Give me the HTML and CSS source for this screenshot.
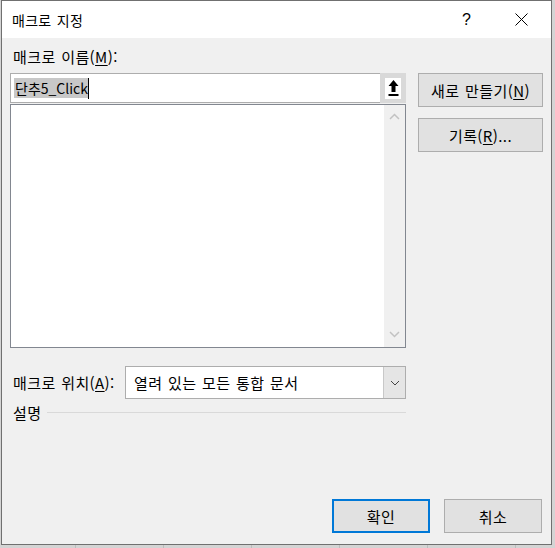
FILE: index.html
```html
<!DOCTYPE html>
<html lang="ko">
<head>
<meta charset="utf-8">
<link rel="stylesheet" href="styles.css">
</head>
<body>
<div class="desk">
  <div class="dialog">
    <div class="titlebar">
      <span class="title">매크로 지정</span>
      <span class="help">?</span>
      <svg class="close" width="13" height="13" viewBox="0 0 13 13"><path d="M0.5 0.5 L12.5 12.5 M12.5 0.5 L0.5 12.5" stroke="#000" stroke-width="1"/></svg>
    </div>
    <div class="content">
      <div class="main">
        <div class="leftcol">
          <div class="label">매크로 이름(<u>M</u>):</div>
          <div class="namebox">
            <div class="nameinput"><span class="sel">단추5_Click</span><span class="caret"></span></div>
            <div class="collapse">
              <div class="collapse-inner">
                <svg width="15" height="20" viewBox="0 0 15 20"><path d="M7.5 2 L2.5 8 L5.5 8 L5.5 14 L9.5 14 L9.5 8 L12.5 8 Z" fill="#000"/><rect x="2.5" y="16" width="10" height="2" fill="#000"/></svg>
              </div>
            </div>
          </div>
          <div class="listbox">
            <div class="list-area"></div>
            <div class="scrollbar">
              <svg width="11" height="7" viewBox="0 0 11 7"><path d="M1 6 L5.5 1.5 L10 6" fill="none" stroke="#c2c2c2" stroke-width="1.5"/></svg>
              <svg width="11" height="7" viewBox="0 0 11 7"><path d="M1 1 L5.5 5.5 L10 1" fill="none" stroke="#c2c2c2" stroke-width="1.5"/></svg>
            </div>
          </div>
        </div>
        <div class="rightcol">
          <div class="btn">새로 만들기(<u>N</u>)</div>
          <div class="btn">기록(<u>R</u>)...</div>
        </div>
      </div>
      <div class="locrow">
        <span class="loclabel">매크로 위치(<u>A</u>):</span>
        <div class="combo">
          <span class="combo-text">열려 있는 모든 통합 문서</span>
          <span class="combo-btn"><svg width="10" height="6" viewBox="0 0 10 6"><path d="M1 1 L5 5 L9 1" fill="none" stroke="#444" stroke-width="1"/></svg></span>
        </div>
      </div>
      <div class="descrow">
        <span class="desclabel">설명</span>
        <span class="descline"></span>
      </div>
      <div class="footer">
        <div class="btn btn-ok">확인</div>
        <div class="btn btn-cancel">취소</div>
      </div>
    </div>
  </div>
</div>
</body>
</html>
```
FILE: styles.css
```css
html, body {
  margin: 0;
  padding: 0;
}
body {
  width: 555px;
  height: 548px;
  overflow: hidden;
  background: #d6d6d6;
  font-family: "Noto Sans CJK KR", "Noto Sans", sans-serif;
  font-size: 15px;
  letter-spacing: 0.4px;
  word-spacing: 1px;
  color: #000;
}
.desk {
  width: 555px;
  height: 548px;
  background-color: #d4d4d4;
  background-image:
    linear-gradient(to right, transparent 75px, #bdbdbd 75px, #bdbdbd 76px, transparent 76px),
    linear-gradient(to bottom, transparent 40px, #bdbdbd 40px, #bdbdbd 41px, transparent 41px);
  background-size: 88px 100%, 100% 29px;
  padding-left: 1px;
  box-sizing: border-box;
}
.dialog {
  width: 551px;
  height: 545px;
  box-sizing: border-box;
  border: 1px solid #707070;
  background: #f0f0f0;
  display: flex;
  flex-direction: column;
}
.titlebar {
  height: 37px;
  background: #fff;
  display: flex;
  align-items: center;
  flex: none;
}
.title {
  margin-left: 10px;
  font-size: 14px;
  letter-spacing: 0.3px;
  flex: 1;
}
.help {
  font-family: "Liberation Sans", sans-serif;
  font-size: 16px;
  width: 12px;
  margin-right: 41px;
}
.close {
  margin-right: 23px;
}
.content {
  flex: 1;
  display: flex;
  flex-direction: column;
  padding: 0 8px 0 8px;
}
.main {
  display: flex;
  gap: 12px;
}
.leftcol {
  width: 396px;
  flex: none;
}
.label {
  margin: 9px 0 0 3px;
  height: 26px;
  line-height: 20px;
}
u {
  text-decoration: underline;
  text-underline-offset: 2px;
}
.namebox {
  height: 30px;
  box-sizing: border-box;
  border: 1px solid #adadad;
  background: #fff;
  display: flex;
}
.nameinput {
  flex: 1;
  display: flex;
  align-items: center;
  padding-left: 3px;
}
.sel {
  background: #c8c8c8;
  line-height: 20px;
  padding: 0 0 0 1px;
  font-size: 14px;
  letter-spacing: 0;
}
.caret {
  width: 1px;
  height: 21px;
  background: #000;
}
.collapse {
  width: 26px;
  background: #d9d9d9;
  margin: -1px -1px -1px 0;
  display: flex;
  align-items: center;
  justify-content: center;
}
.collapse-inner {
  width: 16px;
  height: 21px;
  background: #fff;
  display: flex;
  align-items: center;
  justify-content: center;
}
.listbox {
  margin-top: 1px;
  height: 244px;
  box-sizing: border-box;
  border: 1px solid #828790;
  background: #fff;
  display: flex;
}
.list-area {
  flex: 1;
}
.scrollbar {
  width: 21px;
  background: #f0f0f0;
  display: flex;
  flex-direction: column;
  align-items: center;
  justify-content: space-between;
  padding: 8px 0 9px;
}
.rightcol {
  width: 125px;
  flex: none;
  display: flex;
  flex-direction: column;
  gap: 11px;
  padding-top: 35px;
}
.btn {
  height: 34px;
  box-sizing: border-box;
  border: 1px solid #adadad;
  background: #e1e1e1;
  display: flex;
  align-items: center;
  justify-content: center;
}
.locrow {
  margin-top: 18px;
  display: flex;
  align-items: center;
}
.loclabel {
  width: 115px;
  padding-left: 3px;
  box-sizing: border-box;
  white-space: nowrap;
}
.combo {
  width: 281px;
  height: 33px;
  box-sizing: border-box;
  border: 1px solid #adadad;
  background: #fff;
  display: flex;
}
.combo-text {
  flex: 1;
  display: flex;
  align-items: center;
  padding-left: 8px;
}
.combo-btn {
  width: 21px;
  background: #e5e5e5;
  border-left: 1px solid #c8c8c8;
  display: flex;
  align-items: center;
  justify-content: center;
}
.descrow {
  display: flex;
  align-items: center;
  margin-top: 3px;
  width: 396px;
}
.desclabel {
  padding-left: 3px;
  margin-right: 6px;
}
.descline {
  flex: 1;
  height: 1px;
  background: #d9d9d9;
}
.footer {
  margin-top: auto;
  margin-bottom: 11px;
  margin-right: 1px;
  display: flex;
  justify-content: flex-end;
  gap: 14px;
}
.btn-ok, .btn-cancel {
  width: 98px;
}
.btn-ok {
  border: 2px solid #0078d7;
}
```
